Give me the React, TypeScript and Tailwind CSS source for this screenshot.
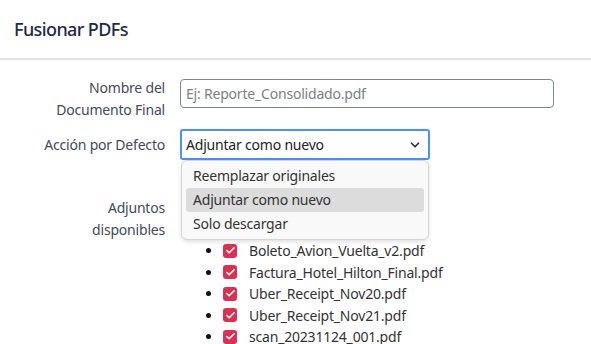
import { ChevronDown, Check } from 'lucide-react';

const FILES = [
  'Boleto_Avion_Vuelta_v2.pdf',
  'Factura_Hotel_Hilton_Final.pdf',
  'Uber_Receipt_Nov20.pdf',
  'Uber_Receipt_Nov21.pdf',
  'scan_20231124_001.pdf',
];

const OPTIONS = ['Reemplazar originales', 'Adjuntar como nuevo', 'Solo descargar'];

export default function App() {
  return (
    <div className="w-[591px] h-[344px] overflow-hidden bg-white font-['Noto_Sans',sans-serif] text-[14px] tracking-[-0.2px] text-[#212529]">
      {/* HEADER */}
      <div className="h-[60px] flex items-center px-[14px] border-b-2 border-[#dee2e6]">
        <h1 className="text-[18px] font-medium tracking-[-0.6px] text-[#1c2b46]">Fusionar PDFs</h1>
      </div>

      {/* FORM */}
      <div className="grid grid-cols-[165px_1fr] gap-x-[15px] pt-[17px]">
        <label className="text-right leading-[22px] text-[#3f4a5a]">
          Nombre del
          <br />
          Documento Final
        </label>
        <div className="pt-[2px]">
          <input
            className="w-[374px] h-[29px] px-[5px] rounded-[4px] border border-[#7d8590] outline-none placeholder:text-[#7b8088]"
            placeholder="Ej: Reporte_Consolidado.pdf"
          />
        </div>

        <label className="text-right leading-[22px] text-[#3f4a5a] mt-[8px] self-center">Acción por Defecto</label>
        <div className="mt-[8px] relative">
          <div className="w-[250px] h-[31px] flex items-center justify-between pl-[4px] pr-[6px] rounded-[3px] border-2 border-[#4a90f5] text-[#222]">
            <span>Adjuntar como nuevo</span>
            <ChevronDown size={14} strokeWidth={3} className="text-[#333]" />
          </div>
          <div className="absolute left-[1px] top-[31px] w-[248px] h-[80px] z-10 bg-[#f9f9f9] border border-[#d5d5d5] rounded-[6px] shadow-[0_2px_4px_rgba(0,0,0,0.12)] py-[3px] px-[4px] text-[#333]">
            {OPTIONS.map((o, i) => (
              <div
                key={o}
                className={`h-[24px] leading-[24px] px-[7px] rounded-[3px] ${i === 1 ? 'bg-[#dcdcdc]' : ''}`}
              >
                {o}
              </div>
            ))}
          </div>
        </div>

        <label className="text-right leading-[22px] text-[#3f4a5a] mt-[37px]">
          Adjuntos
          <br />
          disponibles
        </label>
        <div />
      </div>

      {/* FILE LIST */}
      <ul className="list-disc pl-[223px] -mt-[1px] text-[#333] marker:text-[#111]">
        {FILES.map((f) => (
          <li key={f} className="h-[21.5px] leading-[21px]">
            <span className="inline-flex items-center gap-[12px] align-top">
              <span className="w-[14px] h-[14px] rounded-[3px] bg-[#dc3050] flex items-center justify-center">
                <Check size={11} strokeWidth={3.5} className="text-white" />
              </span>
              <span>{f}</span>
            </span>
          </li>
        ))}
      </ul>
    </div>
  );
}
